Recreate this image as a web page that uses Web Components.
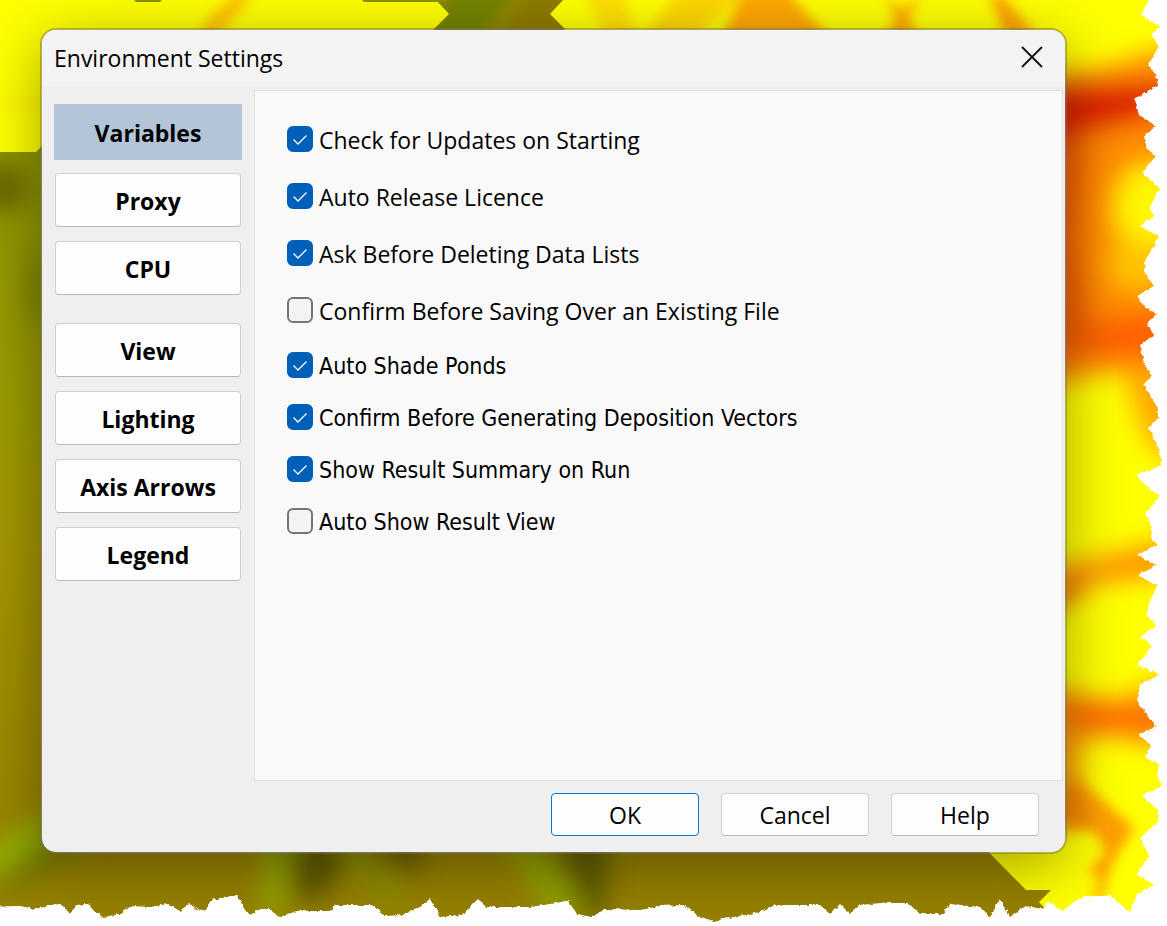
<!DOCTYPE html>
<html lang="en">
<head>
<meta charset="utf-8">
<title>Environment Settings</title>
<style>
  body {
    margin: 0;
    background: #fff;
    color: #000;
    font: 23px/32px "Open Sans", "Noto Sans", sans-serif;
  }
</style>
</head>
<body>

<app-stage>
  <settings-dialog heading="Environment Settings">
    <nav-button slot="nav" active>Variables</nav-button>
    <nav-button slot="nav">Proxy</nav-button>
    <nav-button slot="nav">CPU</nav-button>
    <nav-button slot="nav" spaced>View</nav-button>
    <nav-button slot="nav">Lighting</nav-button>
    <nav-button slot="nav">Axis Arrows</nav-button>
    <nav-button slot="nav">Legend</nav-button>

    <check-group>
      <check-option checked>Check for Updates on Starting</check-option>
      <check-option checked>Auto Release Licence</check-option>
      <check-option checked>Ask Before Deleting Data Lists</check-option>
      <check-option>Confirm Before Saving Over an Existing File</check-option>
    </check-group>
    <check-group dense>
      <check-option checked>Auto Shade Ponds</check-option>
      <check-option checked>Confirm Before Generating Deposition Vectors</check-option>
      <check-option checked>Show Result Summary on Run</check-option>
      <check-option>Auto Show Result View</check-option>
    </check-group>

    <dialog-button slot="actions" primary>OK</dialog-button>
    <dialog-button slot="actions">Cancel</dialog-button>
    <dialog-button slot="actions">Help</dialog-button>
  </settings-dialog>
</app-stage>

<script>
class AppStage extends HTMLElement {
  constructor() {
    super();
    this.attachShadow({ mode: 'open' });
    this.shadowRoot.innerHTML = `
      <style>
        :host {
          display: grid;
          position: relative;
          box-sizing: border-box;
          min-height: 100vh;
          padding: 28px 100px 72px 40px;
          overflow: hidden;
        }

        /* The contour plot behind the dialog */
        .plot {
          position: absolute;
          inset: 0;
          width: 100%;
          height: 100%;
        }

        /* Paper that shows past the torn edge, above the dialog's shadow */
        .tear {
          pointer-events: none;
        }
      </style>
      <svg class="plot" viewBox="0 0 1167 926" preserveAspectRatio="none" aria-hidden="true">
        <defs>
          <filter id="soft" x="-50%" y="-50%" width="200%" height="200%"><feGaussianBlur stdDeviation="12"/></filter>
          <filter id="fine" x="-50%" y="-50%" width="200%" height="200%"><feGaussianBlur stdDeviation="6"/></filter>
          <linearGradient id="olive" x1="0" y1="0" x2="0" y2="1">
            <stop offset="0.16" stop-color="#8e9600"/>
            <stop offset="0.45" stop-color="#9c9c00"/>
            <stop offset="0.6" stop-color="#a59500"/>
            <stop offset="1" stop-color="#968000"/>
          </linearGradient>
        </defs>
        <rect width="1167" height="926" fill="url(#olive)"/>
        <g filter="url(#soft)">
          <ellipse cx="0" cy="188" rx="28" ry="24" fill="#6a6a00"/>
          <ellipse cx="36" cy="290" rx="10" ry="40" fill="#7c8200"/>
          <path d="M-20 856L44 812V842L-20 882Z" fill="#90b400"/>
          <path d="M-10 890L50 838L90 850L20 890Z" fill="#767800"/>
          <path d="M264 835h26l-6 80h-22Z" fill="#93a800"/>
          <path d="M294 840h60l-30 60h-30Z" fill="#605a00"/>
          <path d="M335 840h24l50 65h-24Z" fill="#8a9400"/>
          <path d="M365 840h60l-10 36Z" fill="#605a00"/>
          <path d="M501 835h34l50 75h-40Z" fill="#92a400"/>
          <path d="M550 835h60l-4 80h-20Z" fill="#605e00"/>
        </g>
        <path d="M434 0H564V30H434Z" fill="#918800"/>
        <path d="M455 -10L515 -10L480 40L420 40Z" fill="#768400" filter="url(#fine)"/>
        <path d="M530 -10H570V40H500Z" fill="#8e7c00" filter="url(#fine)"/>
        <path d="M0 0H436L449 14L434 29L420 60H42V133L36 127H42V146L36 152H0Z" fill="#ff0"/>
        <path d="M134 0h28l-2 2h-24ZM362 0h85v2h-83Z" fill="#8a9200"/>
        <path d="M563 0L550 14L565 29V60H960V823L1026 890H1051L1039 902L1060 926H1167V0Z" fill="#ff0"/>
        <g filter="url(#fine)">
          <path d="M238 -8H256L232 20L214 40H198L210 16Z" fill="#ffc400"/>
          <path d="M0 101H40V105H0Z" fill="#ffe800"/>
          <path d="M585 -10H620L640 40H605Z" fill="#ffe000"/>
          <path d="M680 -10H750L690 40H640Z" fill="#ffd800"/>
          <path d="M745 -10H785L832 40H720Z" fill="#ffa800"/>
          <path d="M884 -5L902 10L920 -5L908 20L922 40H882L896 18Z" fill="#ffa600"/>
          <path d="M990 -5H1002L1040 40H1006Z" fill="#ffa400"/>
        </g>
        <g filter="url(#soft)">
          <path d="M1040 76L1100 68L1180 44V380L1110 372L1040 388Z" fill="#ff8c00"/>
          <path d="M1040 310L1100 320L1180 310V358L1100 356L1040 362Z" fill="#ff6000"/>
          <path d="M1040 86L1180 80V112L1120 126L1040 146Z" fill="#e02000"/>
          <path d="M1040 140H1090L1080 240L1094 340H1040Z" fill="#f46000"/>
          <ellipse cx="1150" cy="208" rx="36" ry="44" fill="#fff600"/>
          <ellipse cx="1136" cy="264" rx="28" ry="26" fill="#ffc400"/>
          <path d="M1120 366L1180 370V470L1146 440Z" fill="#ffa800"/>
          <path d="M1180 536L1120 552L1040 570V608L1105 582L1180 576Z" fill="#ff9400"/>
          <path d="M1040 588L1090 580L1064 608H1040Z" fill="#f06400"/>
          <path d="M1040 686L1120 700L1180 670V752L1110 736L1040 752Z" fill="#ff9800"/>
          <path d="M1040 704H1180V732H1080Z" fill="#ff6c00"/>
          <path d="M1050 738H1080V800H1050Z" fill="#ff9c00"/>
        </g>
        <g filter="url(#fine)">
          <path d="M1050 765L1078 778L1134 828L1112 864L1102 898H1090L1102 880L1088 872L1106 852L1094 832L1050 832Z" fill="#ffa000"/>
          <path d="M1055 780L1080 790L1092 822L1055 820Z" fill="#f58a00"/>
        </g>
      </svg>
      <slot></slot>
      <svg class="plot tear" viewBox="0 0 1167 926" preserveAspectRatio="none" aria-hidden="true">
        <filter id="rough" x="-5%" y="-5%" width="110%" height="110%">
          <feTurbulence type="fractalNoise" baseFrequency="0.25" numOctaves="2" seed="4"/>
          <feDisplacementMap in="SourceGraphic" scale="4" xChannelSelector="R" yChannelSelector="G"/>
        </filter>
        <path filter="url(#rough)" fill="#fff" d="M1149 -20V0L1141 15L1160 27L1151 35L1159 46L1148 65L1156 75L1158 85L1135 99L1139 115L1156 126L1144 136L1147 149L1156 156L1142 173L1159 188L1150 208L1153 216L1140 226L1159 237L1146 259L1144 271L1154 286L1137 296L1144 306L1156 314L1147 323L1154 336L1140 344L1144 364L1152 375L1144 384L1150 396L1158 408V418L1149 428L1159 449L1162 465L1136 475L1148 488L1160 496L1145 514L1152 527L1151 538L1157 544L1137 555L1157 565L1138 575L1157 586L1149 603L1147 615L1157 626L1140 636L1152 646L1137 665L1160 675L1140 684L1137 702L1156 726L1139 735L1151 745L1145 757L1159 765L1157 775L1162 786L1142 796L1158 810V822L1140 838L1149 856L1136 874L1154 885L1137 894L1130 912L1111 896H1085L1074 902L1062 911L1048 901L1043 909L1026 906L1010 917L1000 899L990 917L980 907L950 904L943 914H920L908 903H881L860 905L850 914L840 904L830 914L820 905H775L760 912L714 921L700 917L684 905L660 906L640 910L605 909L592 917L577 914L568 901L550 904L530 907H486L478 899L462 915L440 917L430 899L420 907L403 915L385 916L378 909L370 905H335L330 911H297L280 917L270 909H258L250 916L243 907L237 895L212 900L206 909L200 911L189 903L180 911L168 904L150 907L130 906L120 914L103 917L95 912L88 904L77 905L70 914L62 904L50 905L35 909L20 906L-20 907V960H1200V-20Z"/>
      </svg>
    `;
  }
}

class SettingsDialog extends HTMLElement {
  constructor() {
    super();
    this.attachShadow({ mode: 'open' });
    this.shadowRoot.innerHTML = `
      <style>
        :host {
          display: flex;
          flex-direction: column;
          position: relative;
          min-width: 0;
          background: #efefef;
          background-clip: padding-box;
          border: 2px solid rgba(110, 110, 110, 0.5);
          border-radius: 16px;
          box-shadow: 0 14px 60px rgba(0, 0, 0, 0.36);
          overflow: hidden;
        }

        header {
          display: flex;
          align-items: center;
          justify-content: space-between;
          height: 56px;
          padding: 0 12px;
          background: #f3f3f3;
        }

        h1 {
          margin: 0;
          font: inherit;
        }

        .close {
          display: grid;
          place-items: center;
          width: 42px;
          height: 42px;
          padding: 0 0 2px;
          border: 0;
          background: none;
        }

        main {
          display: grid;
          grid-template-columns: 188px 1fr;
          flex: 1;
          gap: 12px;
          padding: 4px 2px 0 12px;
        }

        nav {
          display: flex;
          flex-direction: column;
          gap: 12px;
          padding-top: 14px;
        }

        .panel {
          display: flex;
          flex-direction: column;
          gap: 29px;
          padding: 35px 32px;
          background: #f9f9f9;
          border: 1px solid #e2e2e2;
        }

        footer {
          display: flex;
          justify-content: flex-end;
          gap: 22px;
          padding: 12px 26px 16px;
        }
      </style>
      <header>
        <h1></h1>
        <button class="close" type="button" aria-label="Close">
          <svg width="22" height="22" viewBox="0 0 22 22" fill="none" stroke="#111" stroke-width="1.8">
            <path d="M1 1L21 21M21 1L1 21"/>
          </svg>
        </button>
      </header>
      <main>
        <nav><slot name="nav"></slot></nav>
        <div class="panel"><slot></slot></div>
      </main>
      <footer><slot name="actions"></slot></footer>
    `;
  }

  connectedCallback() {
    this.setAttribute('role', 'dialog');
    this.shadowRoot.querySelector('h1').textContent = this.getAttribute('heading');
  }
}

class NavButton extends HTMLElement {
  constructor() {
    super();
    this.attachShadow({ mode: 'open' });
    this.shadowRoot.innerHTML = `
      <style>
        :host {
          display: block;
          height: 54px;
          padding: 1px;
        }

        :host([spaced]) {
          margin-top: 14px;
        }

        :host([active]) {
          height: 56px;
          padding: 0;
        }

        button {
          width: 100%;
          height: 100%;
          padding: 1px 0 0;
          border: 1px solid #d0d0d0;
          border-bottom-color: #b9b9b9;
          border-radius: 4px;
          background: #fdfdfd;
          color: inherit;
          font: inherit;
          font-weight: bold;
        }

        /* Pressed look: a one pixel checker */
        :host([active]) button {
          border: 0;
          border-radius: 0;
          background: repeating-conic-gradient(#a6caf0 0 25%, #c0c0c0 0 50%) 0 0 / 2px 2px;
        }
      </style>
      <button type="button"><slot></slot></button>
    `;
  }
}

class CheckGroup extends HTMLElement {
  constructor() {
    super();
    this.attachShadow({ mode: 'open' });
    this.shadowRoot.innerHTML = `
      <style>
        :host {
          display: flex;
          flex-direction: column;
          gap: 31px;
        }

        :host([dense]) {
          gap: 26px;
          font-family: "DejaVu Sans Condensed", "Open Sans", sans-serif;
        }
      </style>
      <slot></slot>
    `;
  }
}

class CheckOption extends HTMLElement {
  constructor() {
    super();
    this.attachShadow({ mode: 'open' });
    this.shadowRoot.innerHTML = `
      <style>
        :host {
          display: flex;
        }

        label {
          display: grid;
          grid-template: 26px / 26px auto;
          column-gap: 6px;
          line-height: 26px;
          white-space: nowrap;
        }

        input,
        svg {
          grid-area: 1 / 1;
          width: 26px;
          height: 26px;
        }

        input {
          appearance: none;
          box-sizing: border-box;
          margin: 0;
          border: 2px solid #757575;
          border-radius: 6px;
          background: #f3f3f3;
        }

        input:checked {
          border-color: #005fb8;
          background: #005fb8;
        }

        svg {
          position: relative;
          visibility: hidden;
          pointer-events: none;
        }

        input:checked + svg {
          visibility: visible;
        }

        span {
          padding-top: 1px;
        }
      </style>
      <label>
        <input type="checkbox">
        <svg viewBox="0 0 26 26" fill="none" stroke="#fff" stroke-width="1.3" aria-hidden="true">
          <path d="M6.5 13.5L11 18L19.5 9.5"/>
        </svg>
        <span><slot></slot></span>
      </label>
    `;
  }

  connectedCallback() {
    this.shadowRoot.querySelector('input').checked = this.hasAttribute('checked');
  }
}

class DialogButton extends HTMLElement {
  constructor() {
    super();
    this.attachShadow({ mode: 'open' });
    this.shadowRoot.innerHTML = `
      <style>
        :host {
          display: block;
          width: 148px;
          height: 43px;
        }

        button {
          width: 100%;
          height: 100%;
          padding: 0;
          border: 1px solid #d0d0d0;
          border-bottom-color: #b9b9b9;
          border-radius: 4px;
          background: #fdfdfd;
          color: inherit;
          font: inherit;
        }

        :host([primary]) button {
          border-color: #0078d4;
        }
      </style>
      <button type="button"><slot></slot></button>
    `;
  }
}

customElements.define('app-stage', AppStage);
customElements.define('settings-dialog', SettingsDialog);
customElements.define('nav-button', NavButton);
customElements.define('check-group', CheckGroup);
customElements.define('check-option', CheckOption);
customElements.define('dialog-button', DialogButton);
</script>
</body>
</html>
